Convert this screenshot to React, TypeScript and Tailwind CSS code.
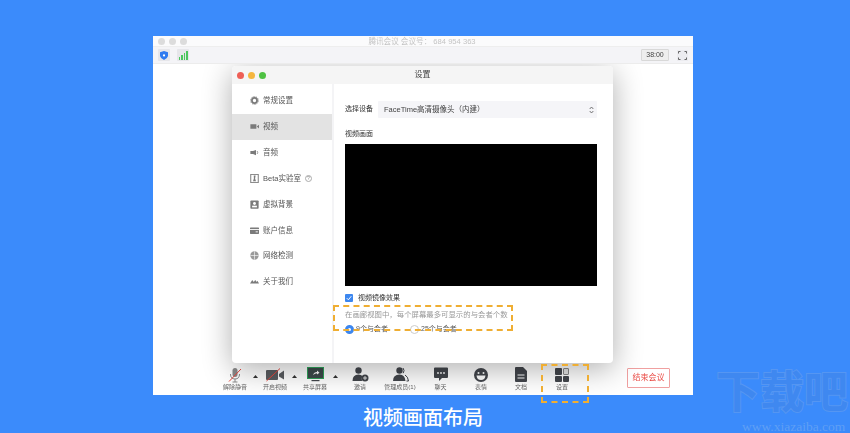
import React from "react";

const cjk = "font-['Liberation_Sans','Noto_Sans_CJK_SC',sans-serif]";

function SideIcon({ name }: { name: string }) {
  const c = "#7b7b7b";
  const p: Record<string, React.ReactNode> = {
    gear: (
      <>
        <circle cx="6" cy="6" r="3.4" fill="none" stroke={c} strokeWidth="2.4" />
        <circle cx="6" cy="6" r="5.2" fill="none" stroke={c} strokeWidth="1.2" strokeDasharray="1.6 1.6" />
      </>
    ),
    video: (
      <>
        <rect x="0.5" y="3" width="8" height="6" fill={c} />
        <path d="M9 6 L12 3.5 V8.5 Z" fill={c} />
      </>
    ),
    audio: (
      <>
        <path d="M0.5 4 H4 L8 2.5 V9.5 L4 8 H0.5 Z" fill={c} />
        <path d="M9.5 4 Q11 6 9.5 8" stroke={c} fill="none" />
      </>
    ),
    beta: (
      <>
        <rect x="1" y="0.5" width="10" height="11" fill="none" stroke={c} strokeWidth="1.3" />
        <path d="M5 2 L7.5 2 L6.8 6 L8 9.5 H4 L5.2 6 Z" fill={c} />
      </>
    ),
    bg: (
      <>
        <rect x="0.5" y="0.5" width="11" height="11" rx="1" fill={c} />
        <circle cx="6" cy="4.7" r="1.9" fill="#fff" />
        <rect x="2.8" y="7.6" width="6.4" height="2.2" fill="#fff" />
      </>
    ),
    card: (
      <>
        <rect x="0" y="2" width="12" height="8.5" rx="0.8" fill={c} />
        <rect x="0" y="4" width="12" height="1.2" fill="#fff" />
        <rect x="7.5" y="7.2" width="3" height="1.2" fill="#fff" />
      </>
    ),
    net: (
      <>
        <circle cx="6" cy="6" r="5.6" fill="#9a9a9a" />
        <path d="M0.5 6 H11.5 M6 0.5 V11.5" stroke="#fff" strokeWidth="0.8" />
      </>
    ),
    about: <path d="M0 8.5 L3 4 L5 6.5 L7 4 L9 6.5 L10 5 L12 8.5 Z" fill={c} />,
  };
  return (
    <svg width="9" height="9" viewBox="0 0 12 12" className="shrink-0">
      {p[name]}
    </svg>
  );
}

const menu = [
  ["gear", "常规设置"],
  ["video", "视频"],
  ["audio", "音频"],
  ["beta", "Beta实验室"],
  ["bg", "虚拟背景"],
  ["card", "账户信息"],
  ["net", "网络检测"],
  ["about", "关于我们"],
];

function ToolItem({ w, label, children }: { w: string; label: string; children: React.ReactNode }) {
  return (
    <div className={`${w} mt-[1px] flex flex-col items-center shrink-0`}>
      <div className="h-[17px] flex items-center justify-center">{children}</div>
      <span className="text-[6px] leading-[9px] text-[#666] whitespace-nowrap">{label}</span>
    </div>
  );
}

function Caret() {
  return (
    <svg width="5" height="3" viewBox="0 0 5 3" className="shrink-0 mb-[5px]">
      <path d="M2.5 0 L5 3 H0 Z" fill="#333" />
    </svg>
  );
}

const dark = "#43464c";

export default function App() {
  return (
    <div className={`relative w-[850px] h-[433px] overflow-hidden bg-[#3b8bfb] pt-[36px] pl-[153px] ${cjk}`}>
      {/* Meeting window */}
      <div className="relative w-[540px] h-[359px] bg-white flex flex-col [filter:blur(0.3px)]">
        <div className="relative z-10 h-[11px] shrink-0 bg-[#fbfbfc] border-b border-[#eeeeee] flex items-center pl-[5px] gap-[4px]">
          <span className="w-[7px] h-[7px] rounded-full bg-[#dcdcdc]" />
          <span className="w-[7px] h-[7px] rounded-full bg-[#dcdcdc]" />
          <span className="w-[7px] h-[7px] rounded-full bg-[#dcdcdc]" />
          <span className="flex-1 text-center text-[7.6px] leading-[11px] text-[#c4c4c4] pr-[40px]">
            腾讯会议 会议号： 684 954 363
          </span>
        </div>
        <div className="relative z-10 h-[17px] shrink-0 bg-[#f4f4f7] border-b border-[#ececec] flex items-center pl-[5px] pr-[5px]">
          <div className="w-[12px] h-[12px] rounded-[1px] bg-[#e6e6ea] flex items-center justify-center">
            <svg width="8" height="9" viewBox="0 0 8 9">
              <path d="M4 0 L8 1.3 V5 Q7.5 7.5 4 9 Q0.5 7.5 0 5 V1.3 Z" fill="#2f7bf0" />
              <circle cx="4" cy="4.4" r="1.1" fill="#fff" />
            </svg>
          </div>
          <div className="ml-[7px] w-[12px] h-[12px] rounded-[1px] bg-[#e6e6ea] flex items-end justify-center gap-[1px] pb-[1px]">
            <span className="w-[1.5px] h-[3px] bg-[#4cc75f]" />
            <span className="w-[1.5px] h-[5px] bg-[#4cc75f]" />
            <span className="w-[1.5px] h-[7px] bg-[#4cc75f]" />
            <span className="w-[1.5px] h-[9px] bg-[#4cc75f]" />
          </div>
          <div className="ml-auto w-[28px] h-[12px] border border-[#d8d8d8] bg-[#eeeeee] rounded-[1px] text-[7px] leading-[10px] text-center text-[#444] font-['Liberation_Sans',sans-serif]">
            38:00
          </div>
          <div className="ml-[8px] w-[11px] h-[11px] bg-[#ececf0] flex items-center justify-center">
            <svg width="9" height="9" viewBox="0 0 9 9" fill="none" stroke="#444" strokeWidth="0.8">
              <path d="M0.5 2.5 V0.5 H2.5 M6.5 0.5 H8.5 V2.5 M8.5 6.5 V8.5 H6.5 M2.5 8.5 H0.5 V6.5" />
            </svg>
          </div>
        </div>
        <div className="flex-1" />
        {/* Bottom toolbar */}
        <div className="h-[33px] shrink-0 flex items-center pl-[64px] pr-[23px]">
          <ToolItem w="w-[36px]" label="解除静音">
            <svg width="16" height="16" viewBox="0 0 16 16">
              <rect x="5.5" y="1" width="5" height="9" rx="2.5" fill="#8a8a8a" />
              <path d="M3.5 7 Q3.5 12 8 12 Q12.5 12 12.5 7 M8 12 V15 M5.5 15 H10.5" fill="none" stroke="#8a8a8a" />
              <path d="M2 14.5 L14 2" stroke="#e8483f" strokeWidth="1" />
            </svg>
          </ToolItem>
          <Caret />
          <ToolItem w="w-[34px]" label="开启视频">
            <svg width="18" height="14" viewBox="0 0 18 14">
              <rect x="0" y="2" width="12" height="10" rx="1" fill="#5a5c60" />
              <path d="M13 6 L18 2.5 V11.5 L13 8.5 Z" fill="#5a5c60" />
              <path d="M0.5 13 L14 0.5" stroke="#e8483f" strokeWidth="1" />
            </svg>
          </ToolItem>
          <Caret />
          <ToolItem w="w-[36px]" label="共享屏幕">
            <svg width="17" height="15" viewBox="0 0 17 15">
              <rect x="0.5" y="0.5" width="16" height="11" fill="#3c4a4a" stroke="#2fa35a" />
              <path d="M6 8 Q7 5 10 5 V3.5 L12.5 5.7 L10 7.5 V6.3 Q8 6.3 6 8 Z" fill="#fff" />
              <rect x="4.5" y="13" width="8" height="1.2" fill={dark} />
            </svg>
          </ToolItem>
          <Caret />
          <ToolItem w="w-[40px] ml-[2px]" label="邀请">
            <svg width="17" height="15" viewBox="0 0 17 15">
              <circle cx="6.5" cy="3.5" r="3.2" fill={dark} />
              <path d="M0.5 14 Q0.5 7.5 6.5 7.5 Q9 7.5 10.5 9 Q9 11 10 14 Z" fill={dark} />
              <circle cx="13" cy="11" r="3.5" fill={dark} />
              <path d="M11 11 H15 M13 9 V13" stroke="#fff" strokeWidth="0.8" />
            </svg>
          </ToolItem>
          <ToolItem w="w-[40px]" label="管理成员(1)">
            <svg width="17" height="15" viewBox="0 0 17 15">
              <circle cx="7.5" cy="3.5" r="3.2" fill={dark} />
              <path d="M1 14 Q1 7.5 7.5 7.5 Q13 7.5 13.5 14 Z" fill={dark} />
              <path d="M11 1 Q13 3.5 11.2 6.2 M13 8 Q16 9.5 16.5 14 H14.5" fill="none" stroke={dark} />
            </svg>
          </ToolItem>
          <ToolItem w="w-[41px]" label="聊天">
            <svg width="14" height="15" viewBox="0 0 14 15">
              <path d="M1 0.5 H13 Q14 0.5 14 1.5 V10 Q14 11 13 11 H8 L5 14 V11 H1 Q0 11 0 10 V1.5 Q0 0.5 1 0.5 Z" fill={dark} />
              <circle cx="4" cy="6" r="0.9" fill="#fff" />
              <circle cx="7" cy="6" r="0.9" fill="#fff" />
              <circle cx="10" cy="6" r="0.9" fill="#fff" />
            </svg>
          </ToolItem>
          <ToolItem w="w-[40px]" label="表情">
            <svg width="14" height="14" viewBox="0 0 14 14">
              <circle cx="7" cy="7" r="7" fill={dark} />
              <circle cx="4.5" cy="5" r="1" fill="#fff" />
              <circle cx="9.5" cy="5" r="1" fill="#fff" />
              <path d="M2.5 7.5 H11.5 Q11 12 7 12 Q3 12 2.5 7.5 Z" fill="#fff" />
            </svg>
          </ToolItem>
          <ToolItem w="w-[40px]" label="文档">
            <svg width="12" height="15" viewBox="0 0 12 15">
              <path d="M0 1 Q0 0 1 0 H8 L12 4 V14 Q12 15 11 15 H1 Q0 15 0 14 Z" fill={dark} />
              <path d="M2.5 8 H9.5 M2.5 11 H9.5" stroke="#fff" strokeWidth="1" />
            </svg>
          </ToolItem>
          <ToolItem w="w-[42px]" label="设置">
            <div className="grid grid-cols-2 gap-[1px] w-[14px] h-[14px]">
              <span className="bg-[#43464c] rounded-[1px]" />
              <span className="border border-[#888] bg-[#e4e4e4] rounded-[1px]" />
              <span className="bg-[#43464c] rounded-[1px]" />
              <span className="bg-[#43464c] rounded-[1px]" />
            </div>
          </ToolItem>
          <div className="ml-auto w-[43px] h-[20px] mb-[2px] border border-[#f0a0a0] rounded-[1px] text-[8px] leading-[18px] text-center text-[#ea4b45]">
            结束会议
          </div>
        </div>

        {/* Settings dialog, floating over the meeting window */}
        <div className="absolute left-[79px] top-[30px] w-[381px] h-[297px] bg-white rounded-[4px] flex flex-col overflow-hidden shadow-[0_6px_30px_rgba(0,0,0,0.32)]">
          <div className="h-[18px] shrink-0 bg-[#f5f5f5] flex items-center relative pl-[5px] gap-[4px]">
            <span className="w-[7px] h-[7px] rounded-full bg-[#ee5f56]" />
            <span className="w-[7px] h-[7px] rounded-full bg-[#f5b63f]" />
            <span className="w-[7px] h-[7px] rounded-full bg-[#4fc243]" />
            <span className="absolute inset-x-0 text-center text-[8px] leading-[18px] text-[#444]">设置</span>
          </div>
          <div className="flex-1 flex min-h-0">
            <div className="w-[102px] shrink-0 border-r-2 border-[#f4f4f6] pt-[4px]">
              {menu.map(([icon, label]) => (
                <div
                  key={label}
                  className={`h-[25.85px] flex items-center pl-[18px] gap-[4px] text-[7.5px] text-[#555] ${
                    label === "视频" ? "bg-[#e3e3e3]" : ""
                  }`}
                >
                  <SideIcon name={icon} />
                  <span className="whitespace-nowrap">{label}</span>
                  {label === "Beta实验室" && (
                    <span className="w-[7px] h-[7px] rounded-full border border-[#aaa] text-[5px] leading-[5px] text-center text-[#888]">
                      ?
                    </span>
                  )}
                </div>
              ))}
            </div>
            <div className="flex-1 pl-[11px] pr-[16px] pt-[17px] text-[#333]">
              <div className="flex items-center h-[17px]">
                <span className="w-[33px] text-[7px] whitespace-nowrap">选择设备</span>
                <div className="flex-1 h-[17px] bg-[#f5f5f8] rounded-[1px] flex items-center justify-between pl-[6px] pr-[3px] text-[7.5px] text-[#444]">
                  <span>FaceTime高清摄像头（内建）</span>
                  <svg width="5" height="8" viewBox="0 0 5 8" fill="none" stroke="#555" strokeWidth="0.8">
                    <path d="M0.7 3 L2.5 1 L4.3 3 M0.7 5 L2.5 7 L4.3 5" />
                  </svg>
                </div>
              </div>
              <div className="mt-[10px] text-[7px] leading-[12px]">视频画面</div>
              <div className="mt-[4px] h-[142px] bg-black" />
              <div className="mt-[7px] flex items-center h-[9px] gap-[5px]">
                <span className="w-[8px] h-[8px] rounded-[1px] bg-[#3d87ef] flex items-center justify-center">
                  <svg width="6" height="6" viewBox="0 0 5 5" fill="none" stroke="#fff" strokeWidth="0.8">
                    <path d="M0.6 2.6 L2 4 L4.4 1" />
                  </svg>
                </span>
                <span className="text-[7px] leading-[9px]">视频镜像效果</span>
              </div>
              <div className="mt-[8px] text-[7.4px] leading-[9px] text-[#999] whitespace-nowrap">
                在画廊视图中，每个屏幕最多可显示的与会者个数
              </div>
              <div className="mt-[6px] flex items-center h-[9px] text-[7px] text-[#555]">
                <span className="w-[9px] h-[9px] rounded-full border-[3px] border-[#3d87ef] bg-white" />
                <span className="ml-[2px] w-[54px]">9个与会者</span>
                <span className="w-[9px] h-[9px] rounded-full border border-[#ccc] bg-white" />
                <span className="ml-[2px]">25个与会者</span>
              </div>
            </div>
          </div>
        </div>
      </div>

      {/* Caption */}
      <div className="absolute left-0 right-0 top-[405px] text-center text-[20px] leading-[26px] font-medium text-white">
        <span className="relative left-[-2px]">视频画面布局</span>
      </div>

      {/* Annotations */}
      <div className="absolute left-[333px] top-[305px] w-[180px] h-[26px] border-2 border-dashed border-[#efae33]" />
      <div className="absolute left-[541px] top-[364px] w-[48px] h-[39px] border-2 border-dashed border-[#efae33]" />

      {/* Watermark */}
      <div className="absolute left-[716px] top-[367px] w-[140px] text-[44px] leading-[52px] font-bold whitespace-nowrap text-[#3f88f0] [-webkit-text-stroke:2px_#5596f2] [paint-order:stroke_fill]">
        下载吧
      </div>
      <div className="absolute left-[742px] top-[420px] text-[13.5px] leading-[14px] whitespace-nowrap text-[#5f9ff5] font-['Liberation_Serif',serif]">
        www.xiazaiba.com
      </div>
    </div>
  );
}
